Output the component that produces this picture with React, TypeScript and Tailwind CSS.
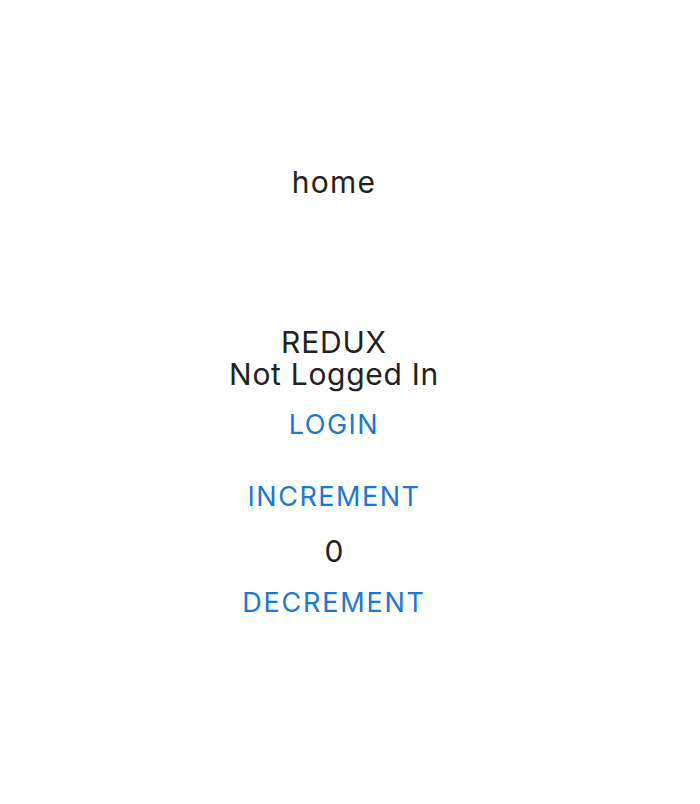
import { useState } from "react"

const font = { fontFamily: "Inter, 'Noto Sans', sans-serif" }

function TextButton({ label, onClick, className = "" }: { label: string; onClick?: () => void; className?: string }) {
  return (
    <button
      onClick={onClick}
      className={`block text-[27px] leading-[30px] text-[#1b78d8] tracking-[1.5px] ${className}`}
    >
      {label}
    </button>
  )
}

export default function App() {
  const [loggedIn, setLoggedIn] = useState(false)
  const [count, setCount] = useState(0)

  return (
    <div className="min-h-[804px] bg-white" style={font}>
      <div className="w-[668px] flex flex-col items-center pt-[165px] text-[#222222]">
        <div className="text-[30px] leading-[34px] tracking-[1.2px]">home</div>

        <div className="mt-[127px] text-[30px] leading-[32px] tracking-[0.8px]">REDUX</div>
        <div className="text-[30px] leading-[32px] tracking-[0.7px]">
          {loggedIn ? "Logged In" : "Not Logged In"}
        </div>
        <TextButton label="LOGIN" className="mt-[20px]" onClick={() => setLoggedIn(!loggedIn)} />

        <TextButton label="INCREMENT" className="mt-[42px]" onClick={() => setCount(count + 1)} />
        <div className="mt-[22px] text-[30px] leading-[34px]">{count}</div>
        <TextButton label="DECREMENT" className="mt-[20px] tracking-[1.8px]" onClick={() => setCount(count - 1)} />
      </div>
    </div>
  )
}
